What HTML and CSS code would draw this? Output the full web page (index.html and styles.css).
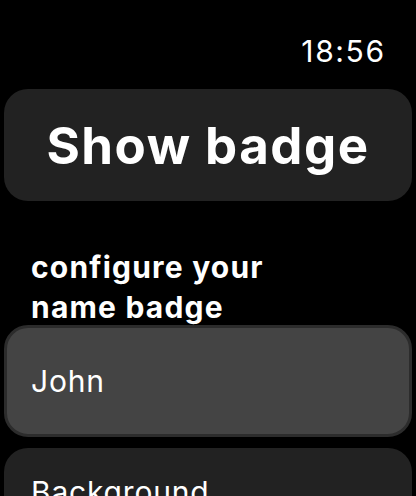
FILE: index.html
```html
<!DOCTYPE html>
<html>
<head>
<meta charset="utf-8">
<link rel="stylesheet" href="styles.css">
</head>
<body>
<div class="screen">
  <div class="status"><span class="time">18:56</span></div>
  <div class="show-btn">Show badge</div>
  <div class="section-title">configure your<br>name badge</div>
  <div class="field">John</div>
  <div class="row">Background</div>
</div>
</body>
</html>
```
FILE: styles.css
```css
html, body {
  margin: 0;
  padding: 0;
  background: #000;
}
.screen {
  width: 416px;
  height: 496px;
  overflow: hidden;
  font-family: Inter, "Noto Sans", sans-serif;
  color: #fff;
  display: flex;
  flex-direction: column;
}
.screen > * {
  flex-shrink: 0;
}
.status {
  height: 89px;
  display: flex;
  justify-content: flex-end;
  align-items: flex-start;
  padding-right: 32px;
  box-sizing: border-box;
}
.time {
  font-size: 30px;
  line-height: 30px;
  margin-top: 36px;
  font-weight: 400;
  letter-spacing: 1.6px;
  margin-right: -1.6px;
}
.show-btn {
  margin: 0 4px;
  height: 112px;
  border-radius: 24px;
  background: #222;
  display: flex;
  align-items: center;
  justify-content: center;
  font-size: 51px;
  font-weight: 700;
  letter-spacing: 1.5px;
}
.section-title {
  padding: 46px 31px 0;
  height: 124px;
  box-sizing: border-box;
  font-size: 30px;
  line-height: 40px;
  font-weight: 700;
  letter-spacing: 1.2px;
}
.field {
  margin: 0 4px;
  height: 112px;
  box-sizing: border-box;
  border-radius: 24px;
  background: #444;
  border: 3px solid #2c2c2c;
  padding-left: 24px;
  display: flex;
  align-items: center;
  font-size: 30px;
  letter-spacing: 0.8px;
}
.row {
  margin: 11px 4px 0;
  height: 112px;
  border-radius: 24px;
  background: #222;
  padding: 26px 27px 0;
  box-sizing: border-box;
  font-size: 30px;
  letter-spacing: 0.8px;
}
```
